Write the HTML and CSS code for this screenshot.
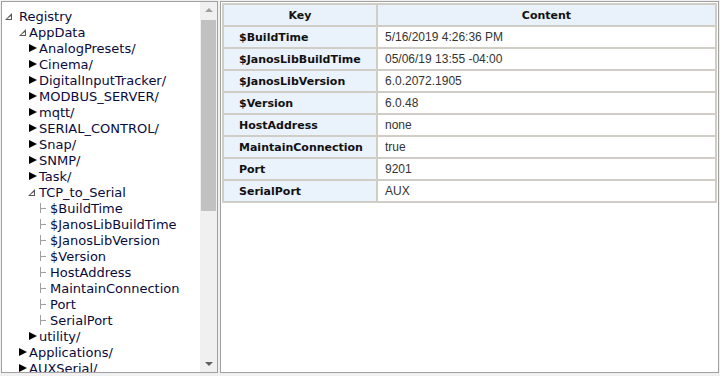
FILE: index.html
```html
<!DOCTYPE html>
<html lang="en">
<head>
  <meta charset="UTF-8" />
  <title>Registry</title>
  <link rel="stylesheet" href="styles.css">
</head>
<body>
  <div class="app">
    <!-- Tree -->
    <div class="tree-pane">
      <div class="tree-scroll">
        <ul class="tree">
          <li class="open"><div class="node"><span class="tw"></span>Registry</div>
            <ul>
              <li class="open"><div class="node"><span class="tw"></span>AppData</div>
                <ul>
                  <li class="closed"><div class="node"><span class="tw"></span>AnalogPresets/</div></li>
                  <li class="closed"><div class="node"><span class="tw"></span>Cinema/</div></li>
                  <li class="closed"><div class="node"><span class="tw"></span>DigitalInputTracker/</div></li>
                  <li class="closed"><div class="node"><span class="tw"></span>MODBUS_SERVER/</div></li>
                  <li class="closed"><div class="node"><span class="tw"></span>mqtt/</div></li>
                  <li class="closed"><div class="node"><span class="tw"></span>SERIAL_CONTROL/</div></li>
                  <li class="closed"><div class="node"><span class="tw"></span>Snap/</div></li>
                  <li class="closed"><div class="node"><span class="tw"></span>SNMP/</div></li>
                  <li class="closed"><div class="node"><span class="tw"></span>Task/</div></li>
                  <li class="open"><div class="node"><span class="tw"></span>TCP_to_Serial</div>
                    <ul>
                      <li class="leaf"><div class="node"><span class="tw"></span>$BuildTime</div></li>
                      <li class="leaf"><div class="node"><span class="tw"></span>$JanosLibBuildTime</div></li>
                      <li class="leaf"><div class="node"><span class="tw"></span>$JanosLibVersion</div></li>
                      <li class="leaf"><div class="node"><span class="tw"></span>$Version</div></li>
                      <li class="leaf"><div class="node"><span class="tw"></span>HostAddress</div></li>
                      <li class="leaf"><div class="node"><span class="tw"></span>MaintainConnection</div></li>
                      <li class="leaf"><div class="node"><span class="tw"></span>Port</div></li>
                      <li class="leaf"><div class="node"><span class="tw"></span>SerialPort</div></li>
                    </ul>
                  </li>
                  <li class="closed"><div class="node"><span class="tw"></span>utility/</div></li>
                </ul>
              </li>
              <li class="closed"><div class="node"><span class="tw"></span>Applications/</div></li>
              <li class="closed"><div class="node"><span class="tw"></span>AUXSerial/</div></li>
            </ul>
          </li>
        </ul>
      </div>
      <!-- fake scrollbar -->
      <div class="scrollbar">
        <span class="arrow up"></span>
        <div class="track"><div class="thumb"></div></div>
        <span class="arrow down"></span>
      </div>
    </div>

    <!-- Detail table -->
    <div class="table-pane">
      <table class="kv">
        <thead>
          <tr><th class="col-key">Key</th><th>Content</th></tr>
        </thead>
        <tbody>
          <tr><td class="key">$BuildTime</td><td>5/16/2019 4:26:36 PM</td></tr>
          <tr><td class="key">$JanosLibBuildTime</td><td>05/06/19 13:55 -04:00</td></tr>
          <tr><td class="key">$JanosLibVersion</td><td>6.0.2072.1905</td></tr>
          <tr><td class="key">$Version</td><td>6.0.48</td></tr>
          <tr><td class="key">HostAddress</td><td>none</td></tr>
          <tr><td class="key">MaintainConnection</td><td>true</td></tr>
          <tr><td class="key">Port</td><td>9201</td></tr>
          <tr><td class="key">SerialPort</td><td>AUX</td></tr>
        </tbody>
      </table>
    </div>
  </div>
</body>
</html>
```

FILE: styles.css
```css
body {
  margin: 0;
  background: #f0f0f0;
  font-family: "DejaVu Sans", Verdana, sans-serif;
}
.app {
  display: flex;
  gap: 2px;
  padding: 1px;
  height: 374px;
  box-sizing: border-box;
}
/* Tree */
.tree-pane {
  width: 217px;
  background: white;
  border: 1px solid #a0a0a0;
  box-sizing: border-box;
  display: flex;
  overflow: hidden;
}
.tree-scroll {
  flex: 1;
  padding: 6px 0 0 3px;
  overflow: hidden;
}
.tree, .tree ul {
  list-style: none;
  margin: 0;
  padding: 0;
}
.tree ul {
  padding-left: 10px;
}
.tree li li li ul {
  padding-left: 11px;
}
.node {
  display: flex;
  align-items: center;
  height: 16px;
  font-size: 13px;
  color: #0a0a3c;
  white-space: nowrap;
}
.tw {
  width: 14px;
  height: 16px;
  flex: none;
  position: relative;
}
/* expanded: hollow corner triangle */
.open > .node > .tw::before {
  content: "";
  position: absolute;
  left: 0;
  top: 5px;
  border-left: 7px solid transparent;
  border-bottom: 7px solid #555;
}
.open > .node > .tw::after {
  content: "";
  position: absolute;
  left: 2px;
  top: 8px;
  border-left: 4px solid transparent;
  border-bottom: 3px solid white;
}
.tree li .open > .node > .tw::before { left: 4px; }
.tree li .open > .node > .tw::after { left: 6px; }
.tree li li .open > .node > .tw::before { left: 3px; }
.tree li li .open > .node > .tw::after { left: 5px; }
/* collapsed: solid arrow */
.closed > .node > .tw::before {
  content: "";
  position: absolute;
  left: 4px;
  top: 4px;
  border-top: 4px solid transparent;
  border-bottom: 4px solid transparent;
  border-left: 8px solid #000;
}
/* leaf connector */
.leaf > .node > .tw::before {
  content: "";
  position: absolute;
  left: 4px;
  top: 3px;
  width: 1px;
  height: 10px;
  background: #a0a0a0;
}
.leaf > .node > .tw::after {
  content: "";
  position: absolute;
  left: 5px;
  top: 8px;
  width: 5px;
  height: 1px;
  background: #a0a0a0;
}
/* Scrollbar */
.scrollbar {
  width: 17px;
  background: #f0f0f0;
  display: flex;
  flex-direction: column;
  flex: none;
}
.arrow {
  height: 17px;
  position: relative;
  flex: none;
}
.arrow::before {
  content: "";
  position: absolute;
  left: 5px;
  border-left: 4px solid transparent;
  border-right: 4px solid transparent;
}
.arrow.up::before {
  top: 6px;
  border-bottom: 4px solid #a0a0a0;
}
.arrow.down::before {
  top: 7px;
  border-top: 4px solid #606060;
}
.track {
  flex: 1;
  padding: 1px;
}
.thumb {
  height: 191px;
  background: #c1c1c1;
}
/* Table */
.table-pane {
  flex: 1;
  background: white;
  border: 1px solid #a0a0a0;
  box-sizing: border-box;
  padding: 1px;
}
.kv {
  width: 100%;
  border-collapse: collapse;
  border: 1px solid #c6c2bc;
}
.kv th, .kv td {
  border: 2px solid #d0ccc6;
  height: 20px;
  padding: 0;
}
.kv th {
  background: #e9f1fa;
  font-size: 11px;
  font-weight: bold;
  color: #111;
  height: 20px;
}
.kv th.col-key {
  width: 152px;
}
.kv td {
  font-family: "Liberation Sans", Arial, sans-serif;
  font-size: 12px;
  color: #333;
  padding-left: 7px;
}
.kv td.key {
  background: #eaf2fb;
  font-family: "DejaVu Sans", Verdana, sans-serif;
  font-size: 11px;
  font-weight: bold;
  color: #111;
  padding-left: 15px;
}
```
